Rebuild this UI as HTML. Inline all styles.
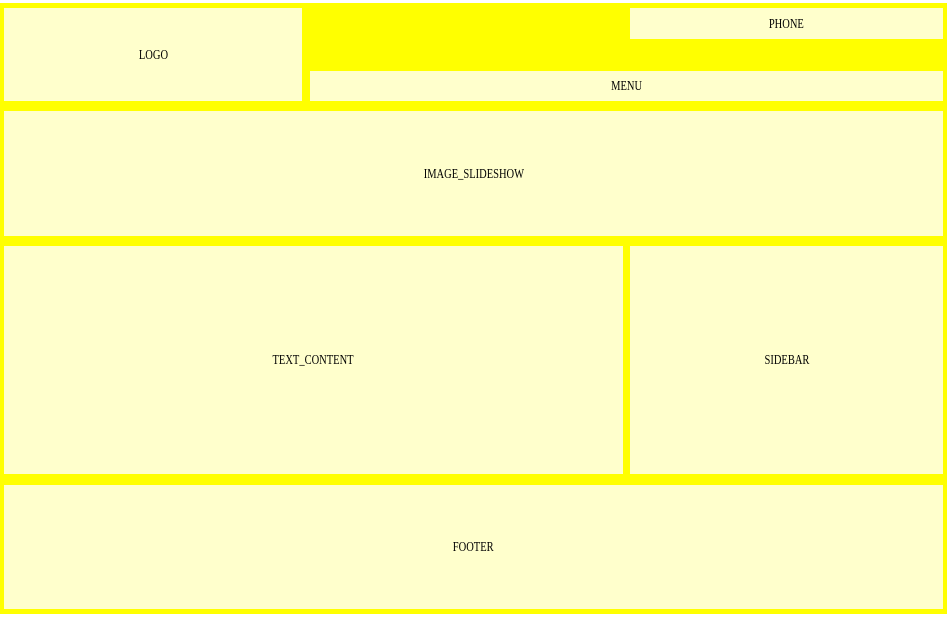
<!DOCTYPE html>
<html><head><style>
html,body{margin:0;padding:0;background:#fff;width:950px;height:633px;overflow:hidden}
.bg{position:absolute;left:0;top:3px;width:947px;height:611px;background:#ffff00}
.b{position:absolute;background:#ffffcc;display:flex;align-items:center;justify-content:center;font-family:"Liberation Serif",serif;font-size:14px;color:#000}
.b span{display:inline-block;transform:scaleX(0.75);position:relative;top:1px}
</style></head><body>
<div class="bg"></div>
<div class="b" style="left:4px;top:8px;width:298px;height:93px"><span>LOGO</span></div>
<div class="b" style="left:630px;top:8px;width:313px;height:31px"><span>PHONE</span></div>
<div class="b" style="left:310px;top:71px;width:633px;height:30px"><span>MENU</span></div>
<div class="b" style="left:4px;top:111px;width:939px;height:125px"><span>IMAGE_SLIDESHOW</span></div>
<div class="b" style="left:4px;top:246px;width:619px;height:228px"><span>TEXT_CONTENT</span></div>
<div class="b" style="left:630px;top:246px;width:313px;height:228px"><span>SIDEBAR</span></div>
<div class="b" style="left:4px;top:485px;width:939px;height:124px"><span>FOOTER</span></div>
</body></html>
